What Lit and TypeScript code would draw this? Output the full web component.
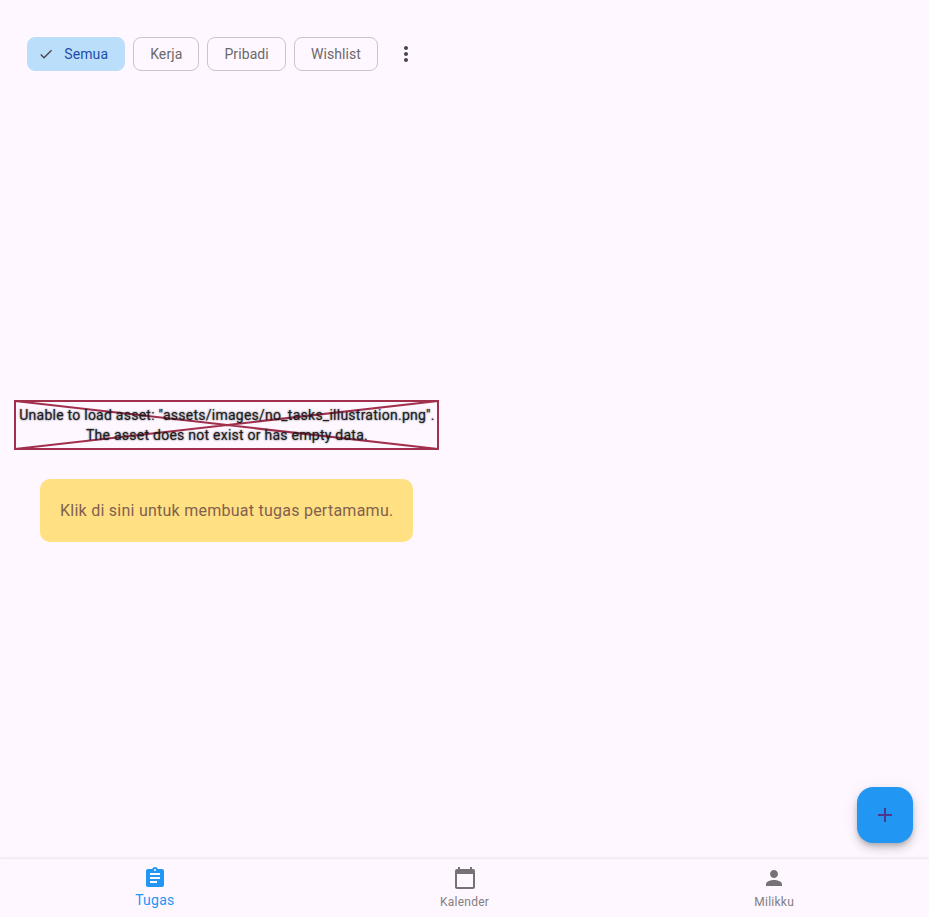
import { LitElement, html, svg, css } from "lit";
import { customElement, property } from "lit/decorators.js";

const icons = {
  check: svg`<path d="M9 16.17 4.83 12l-1.42 1.41L9 19 21 7l-1.41-1.41z"/>`,
  more: svg`<path d="M12 8c1.1 0 2-.9 2-2s-.9-2-2-2-2 .9-2 2 .9 2 2 2zm0 2c-1.1 0-2 .9-2 2s.9 2 2 2 2-.9 2-2-.9-2-2-2zm0 6c-1.1 0-2 .9-2 2s.9 2 2 2 2-.9 2-2-.9-2-2-2z"/>`,
  add: svg`<path d="M19 13h-6v6h-2v-6H5v-2h6V5h2v6h6v2z"/>`,
  tasks: svg`<path d="M19 3h-4.18C14.4 1.84 13.3 1 12 1c-1.3 0-2.4.84-2.82 2H5c-1.1 0-2 .9-2 2v14c0 1.1.9 2 2 2h14c1.1 0 2-.9 2-2V5c0-1.1-.9-2-2-2zm-7 0c.55 0 1 .45 1 1s-.45 1-1 1-1-.45-1-1 .45-1 1-1zm2 14H7v-2h7v2zm3-4H7v-2h10v2zm0-4H7V7h10v2z"/>`,
  calendar: svg`<path d="M20 3h-1V1h-2v2H7V1H5v2H4c-1.1 0-2 .9-2 2v16c0 1.1.9 2 2 2h16c1.1 0 2-.9 2-2V5c0-1.1-.9-2-2-2zm0 18H4V8h16v13z"/>`,
  person: svg`<path d="M12 12c2.21 0 4-1.79 4-4s-1.79-4-4-4-4 1.79-4 4 1.79 4 4 4zm0 2c-2.67 0-8 1.34-8 4v2h16v-2c0-2.66-5.33-4-8-4z"/>`,
};

@customElement("material-icon")
class MaterialIcon extends LitElement {
  @property() name: keyof typeof icons = "check";
  static styles = css`
    :host { display: block; width: 24px; height: 24px; flex: none; }
    .glyph { display: block; width: 100%; height: 100%; fill: currentColor; }
  `;
  render() {
    return html`<svg class="glyph" viewBox="0 0 24 24">${icons[this.name]}</svg>`;
  }
}

@customElement("app-root")
class AppRoot extends LitElement {
  static styles = css`
    :host {
      display: flex;
      flex-direction: column;
      position: relative;
      height: 917px;
      overflow: hidden;
      background: #fef7ff;
      font-family: Roboto, sans-serif;
    }
    .filters { display: flex; align-items: center; gap: 8px; padding: 37px 0 0 27.3px; height: 34px; }
    .chip {
      box-sizing: border-box;
      display: flex;
      align-items: center;
      height: 34px;
      padding: 0 16px;
      border: 1px solid #cac4d0;
      border-radius: 8px;
      font-size: 14px;
      line-height: 20px;
      letter-spacing: 0.1px;
      color: #6a686b;
    }
    .chip.selected { background: #bbdefb; border-color: #bbdefb; color: #1c4ea8; padding-left: 10px; }
    .check { width: 16px; height: 16px; margin-right: 10px; color: #49454f; }
    .more { margin-left: 8px; color: #49454f; }
    .body { flex: 1; display: flex; flex-direction: column; align-items: flex-start; padding: 329px 0 0 14px; }
    .missing {
      box-sizing: border-box;
      display: grid;
      width: 425px;
      height: 50px;
    }
    .cross, .message { grid-area: 1 / 1; }
    .cross { width: 425px; height: 50px; fill: none; stroke: #a1304d; stroke-width: 2; }
    .message {
      padding: 5px 0 0 1px;
      text-align: center;
      font-size: 14px;
      line-height: 20px;
      letter-spacing: 0.25px;
      color: #1d1b20;
      text-shadow: 0 0 2px rgba(0, 0, 0, .7);
      white-space: pre;
    }
    .hint {
      margin: 29px 0 0 26px;
      padding: 20px;
      border-radius: 10px;
      background: #ffe082;
      color: #82604f;
      font-size: 16px;
      line-height: 23px;
      letter-spacing: 0.25px;
      white-space: nowrap;
    }
    .fab {
      position: absolute;
      right: 16px;
      bottom: 74px;
      display: grid;
      place-items: center;
      width: 56px;
      height: 56px;
      border-radius: 16px;
      background: #2196f3;
      color: #4f378b;
      box-shadow: 0 3px 5px -1px rgba(0, 0, 0, .2), 0 6px 10px rgba(0, 0, 0, .14), 0 1px 18px rgba(0, 0, 0, .06);
    }
    .nav {
      display: flex;
      height: 58px;
      background: #fef7ff;
      box-shadow: 0 0 3px rgba(0, 0, 0, .16);
    }
    .tab {
      flex: 1;
      display: flex;
      flex-direction: column;
      align-items: center;
      padding-top: 7px;
      color: #757175;
      font-size: 12px;
      line-height: 16px;
      letter-spacing: 0.25px;
    }
    .label { margin-top: 4px; color: #827e82; }
    .tab.active { color: #2196f3; font-size: 14px; }
    .active .label { margin-top: 2px; color: #2196f3; }
  `;

  render() {
    const tabs = [
      { label: "Tugas", icon: "tasks", active: true },
      { label: "Kalender", icon: "calendar", active: false },
      { label: "Milikku", icon: "person", active: false },
    ];
    return html`
      <div class="filters">
        <div class="chip selected"><material-icon class="check" name="check"></material-icon>Semua</div>
        ${["Kerja", "Pribadi", "Wishlist"].map((c) => html`<div class="chip">${c}</div>`)}
        <material-icon class="more" name="more"></material-icon>
      </div>
      <div class="body">
        <div class="missing">
          <svg class="cross" viewBox="0 0 425 50"><path d="M1 1H424V49H1zL424 49M424 1L1 49"/></svg>
          <div class="message">Unable to load asset: "assets/images/no_tasks_illustration.png".
The asset does not exist or has empty data.</div>
        </div>
        <div class="hint">Klik di sini untuk membuat tugas pertamamu.</div>
      </div>
      <div class="fab"><material-icon name="add"></material-icon></div>
      <div class="nav">
        ${tabs.map((t) => html`<div class="tab ${t.active ? "active" : ""}">
          <material-icon name=${t.icon}></material-icon><span class="label">${t.label}</span>
        </div>`)}
      </div>
    `;
  }
}
